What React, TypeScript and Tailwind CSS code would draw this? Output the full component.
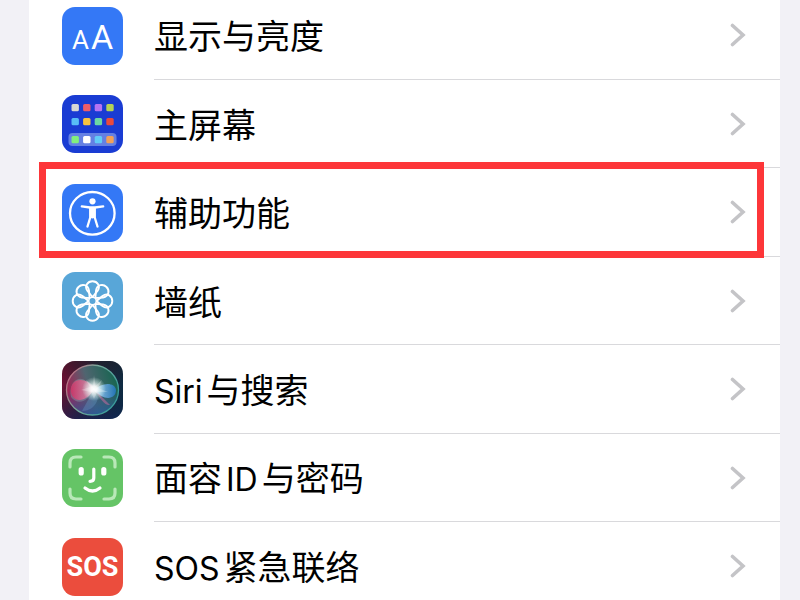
import type { ReactNode } from "react";

const frame = "block h-[58px] w-[61px] shrink-0 overflow-hidden rounded-[13px]";

function DisplayIcon() {
  return (
    <span
      aria-hidden="true"
      className={`${frame} flex items-baseline justify-center gap-[2px] bg-[#3478f6] pt-[5px] font-[Roboto,sans-serif] leading-[50px] text-white`}
    >
      <span className="text-[26px]">A</span>
      <span className="text-[34px]">A</span>
    </span>
  );
}

const apps = [
  ["#d8d8d4", "#ee5d68", "#b574f2", "#b5d455"],
  ["#58bdf6", "#f8c33f", "#6cd7a4", "#ea4a3c"],
  ["#82ee7c", "#ffffff", "#61cbf7", "#f2a158"],
];
const appRows = [9, 23, 41];

function HomeIcon() {
  return (
    <svg viewBox="0 0 61 58" className={frame} aria-hidden="true">
      <rect width="61" height="58" fill="#1a3cd3" />
      <rect x="6.500" y="38" width="48" height="13" rx="4" fill="#6480e3" />
      {apps.map((row, r) =>
        row.map((fill, c) => (
          <rect key={fill} x={9.5 + c * 11.6} y={appRows[r]} width="7.400" height="7.200" rx="1.500" fill={fill} />
        )),
      )}
    </svg>
  );
}

function AccessibilityIcon() {
  return (
    <svg viewBox="0 0 61 58" className={frame} aria-hidden="true">
      <rect width="61" height="58" fill="#3478f6" />
      <ellipse cx="30.300" cy="29.300" rx="22.300" ry="21.300" fill="none" stroke="#fff" strokeWidth="2.300" />
      <circle cx="30.500" cy="17.300" r="3.100" fill="#fff" />
      <path
        d="M19.800 22.300 L28 23.500 H33 L41.200 22.300 M28.400 24 V33 L25.500 42.500 M32.600 24 V33 L35.500 42.500"
        fill="none"
        stroke="#fff"
        strokeWidth="2.300"
        strokeLinecap="round"
        strokeLinejoin="round"
      />
      <path d="M27.300 23 H33.700 V33.500 L30.500 34.500 L27.300 33.500 Z" fill="#fff" />
    </svg>
  );
}

const petals = [0, 45, 90, 135, 180, 225, 270, 315];

function WallpaperIcon() {
  return (
    <svg viewBox="0 0 61 58" className={frame} aria-hidden="true">
      <rect width="61" height="58" fill="#58a6d8" />
      <g transform="translate(30.5 29)" fill="none" stroke="#fff" strokeWidth="1.900" strokeLinejoin="round">
        {petals.map((angle) => (
          <path
            key={angle}
            transform={`rotate(${angle})`}
            d="M0 -4 L-5 -10 C-8.500 -15 -4.800 -19.800 0 -19.800 C4.800 -19.800 8.500 -15 5 -10 Z"
          />
        ))}
        <circle r="3.800" fill="#58a6d8" strokeWidth="1.600" />
      </g>
    </svg>
  );
}

function SiriIcon() {
  return (
    <svg viewBox="0 0 61 58" className={frame} aria-hidden="true">
      <defs>
        <linearGradient id="siri-bg" x1="0" y1="0.300" x2="1" y2="0.600">
          <stop offset="0" stopColor="#760f35" />
          <stop offset="0.450" stopColor="#29233b" />
          <stop offset="1" stopColor="#0b2c45" />
        </linearGradient>
        <linearGradient id="siri-shade" x1="0" y1="0" x2="0" y2="1">
          <stop offset="0" stopColor="#181e22" stopOpacity="0.500" />
          <stop offset="0.400" stopColor="#181e22" stopOpacity="0" />
          <stop offset="1" stopColor="#15205c" stopOpacity="0.500" />
        </linearGradient>
        <linearGradient id="siri-orb" x1="0" y1="0.600" x2="1" y2="0.300">
          <stop offset="0" stopColor="#ae1c51" />
          <stop offset="0.450" stopColor="#4f6570" />
          <stop offset="1" stopColor="#14654f" />
        </linearGradient>
        <linearGradient id="siri-deep" x1="0" y1="0" x2="0" y2="1">
          <stop offset="0.500" stopColor="#234d90" stopOpacity="0" />
          <stop offset="1" stopColor="#235b9e" stopOpacity="0.800" />
        </linearGradient>
        <linearGradient id="siri-ring" x1="0" y1="0" x2="1" y2="0.500">
          <stop offset="0" stopColor="#d45b7b" />
          <stop offset="0.500" stopColor="#76a99b" />
          <stop offset="1" stopColor="#3b9c9b" />
        </linearGradient>
        <radialGradient id="siri-glow">
          <stop offset="0" stopColor="#fff" />
          <stop offset="0.250" stopColor="#fff" stopOpacity="0.900" />
          <stop offset="1" stopColor="#d9fff4" stopOpacity="0" />
        </radialGradient>
        <linearGradient id="siri-left" x1="0" y1="0" x2="1" y2="0">
          <stop offset="0" stopColor="#d92c63" />
          <stop offset="1" stopColor="#e8a0bd" />
        </linearGradient>
        <linearGradient id="siri-right" x1="0" y1="0" x2="1" y2="0">
          <stop offset="0" stopColor="#b6e3ff" />
          <stop offset="1" stopColor="#2478cb" />
        </linearGradient>
      </defs>
      <rect width="61" height="58" fill="url(#siri-bg)" />
      <rect width="61" height="58" fill="url(#siri-shade)" />
      <ellipse cx="30.500" cy="29" rx="26" ry="25" fill="url(#siri-orb)" />
      <ellipse cx="30.500" cy="29" rx="26" ry="25" fill="url(#siri-deep)" />
      <path d="M31 28 C26 42 15 44 9 36 C6 24 15 13 24 20 Z" fill="#8ea6ae" opacity="0.400" />
      <path d="M32 28 C27 17 10 15 9 28 C8 42 24 43 32 28 Z" fill="url(#siri-left)" opacity="0.750" />
      <path d="M32 29 C40 21 53 21 54 29 C54 39 41 40 32 29 Z" fill="url(#siri-right)" opacity="0.800" />
      <path d="M34 30 L48 44 C43 45 38 38 34 30 Z" fill="#c66a9f" opacity="0.550" />
      <path d="M31 30 L20 50 C27 50 34 46 36 37 Z" fill="#6ca4d4" opacity="0.300" />
      <circle cx="32" cy="28" r="12" fill="url(#siri-glow)" />
      <path d="M32 14 L33.500 25 L40 19 L36 27 L46 31 L35 31 L32 38 L29 31 L19 29 L28 26 L24 19 L31 24 Z" fill="#fff" opacity="0.250" />
      <ellipse cx="30.500" cy="29" rx="26" ry="25" fill="none" stroke="url(#siri-ring)" strokeWidth="1.300" />
    </svg>
  );
}

function FaceIdIcon() {
  return (
    <svg viewBox="0 0 61 58" className={frame} aria-hidden="true">
      <rect width="61" height="58" fill="#65c466" />
      <g fill="none" strokeLinecap="round" strokeWidth="3.200">
        <path
          d="M8 18 V14 Q8 8 14 8 H19 M42 8 H47 Q53 8 53 14 V18 M53 40 V44 Q53 50 47 50 H42 M19 50 H14 Q8 50 8 44 V40"
          stroke="#b9e8b8"
        />
        <path d="M31.800 20 V29 Q31.800 32.300 28 32.300" stroke="#fff" />
        <path d="M23 39 Q30.500 45 38 39" stroke="#fff" />
        <path d="M19.200 20.500 V24 M41.800 20.500 V24" stroke="#fff" strokeWidth="5.200" />
      </g>
    </svg>
  );
}

function SosIcon() {
  return (
    <span
      aria-hidden="true"
      className={`${frame} bg-[#eb4d3d] text-center font-[Roboto,sans-serif] text-[27px] leading-[58px] font-bold text-white`}
    >
      SOS
    </span>
  );
}

function Latin({ children }: { children: string }) {
  return <span className="text-[32px]">{children}</span>;
}

type Item = { id: string; icon: ReactNode; label: ReactNode; highlighted?: boolean };

const items: Item[] = [
  { id: "display", icon: <DisplayIcon />, label: "显示与亮度" },
  { id: "home", icon: <HomeIcon />, label: "主屏幕" },
  { id: "accessibility", icon: <AccessibilityIcon />, label: "辅助功能", highlighted: true },
  { id: "wallpaper", icon: <WallpaperIcon />, label: "墙纸" },
  { id: "siri", icon: <SiriIcon />, label: <><Latin>Siri</Latin><span>与搜索</span></> },
  { id: "face-id", icon: <FaceIdIcon />, label: <><span>面容</span><Latin>ID</Latin><span>与密码</span></> },
  { id: "sos", icon: <SosIcon />, label: <><Latin>SOS</Latin><span>紧急联络</span></> },
];

function Row({ item }: { item: Item }) {
  return (
    <li className="relative odd:h-[89px] even:h-[88px]">
      <a href={`#${item.id}`} className="flex h-full items-center pl-[33px]">
        {item.icon}
        <span className="ml-[31px] flex h-full min-w-0 flex-1 items-center justify-between border-b border-[#d9d9dc] pr-[34px]">
          <span className="flex items-baseline gap-1 pt-1 whitespace-nowrap">{item.label}</span>
          <svg viewBox="0 0 16 24" className="h-6 w-4 shrink-0" aria-hidden="true">
            <path
              d="M2.500 2.500 L13 12 L2.500 21.500"
              fill="none"
              stroke="#c4c4c7"
              strokeWidth="3.600"
              strokeLinecap="round"
              strokeLinejoin="miter"
            />
          </svg>
        </span>
      </a>
      {item.highlighted && (
        <span className="pointer-events-none absolute -top-1.5 right-4 -bottom-px left-2.5 z-10 border-[7px] border-[#fd3639]" />
      )}
    </li>
  );
}

export default function App() {
  return (
    <main className="h-screen overflow-hidden bg-[#f2f1f6] pr-5 pl-[29px] font-[Inter,'Noto_Sans_CJK_SC',sans-serif] text-[34px] leading-[48px] text-black">
      <ul className="-mt-[9px] bg-white">
        {items.map((item) => (
          <Row key={item.id} item={item} />
        ))}
      </ul>
    </main>
  );
}
